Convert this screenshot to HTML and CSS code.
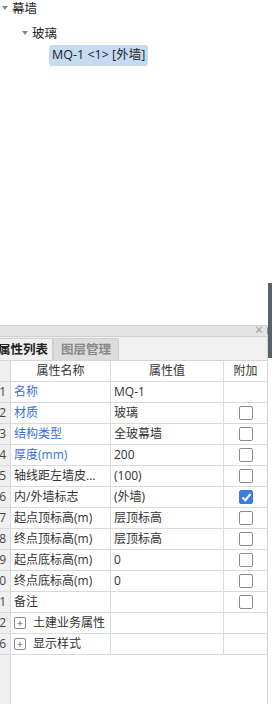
FILE: index.html
```html
<!DOCTYPE html>
<html lang="zh-CN">
<head>
  <meta charset="UTF-8" />
  <title>属性列表</title>
  <link rel="stylesheet" href="styles.css">
</head>
<body>

<!-- Top: component tree -->
<div class="tree">
  <div class="node lvl0"><span class="arrow"></span>幕墙</div>
  <div class="node lvl1"><span class="arrow"></span>玻璃</div>
  <div class="node lvl2"><span class="sel">MQ-1 &lt;1&gt; [外墙]</span></div>
</div>
<div class="splitter"><span class="notch"></span></div>

<!-- Bottom: property panel -->
<div class="panel">
  <div class="panel-head"><span class="close">×</span></div>
  <div class="tabs">
    <div class="tab active">属性列表</div>
    <div class="tab">图层管理</div>
  </div>

  <div class="grid">
    <div class="row head">
      <div class="num"></div>
      <div class="cell center">属性名称</div>
      <div class="cell center">属性值</div>
      <div class="cell center">附加</div>
    </div>
    <div class="row"><div class="num">1</div><div class="cell blue">名称</div><div class="cell">MQ-1</div><div class="cell"></div></div>
    <div class="row"><div class="num">2</div><div class="cell blue">材质</div><div class="cell">玻璃</div><div class="cell"><span class="box"></span></div></div>
    <div class="row"><div class="num">3</div><div class="cell blue">结构类型</div><div class="cell">全玻幕墙</div><div class="cell"><span class="box"></span></div></div>
    <div class="row"><div class="num">4</div><div class="cell blue">厚度(mm)</div><div class="cell">200</div><div class="cell"><span class="box"></span></div></div>
    <div class="row"><div class="num">5</div><div class="cell">轴线距左墙皮...</div><div class="cell">(100)</div><div class="cell"><span class="box"></span></div></div>
    <div class="row"><div class="num">6</div><div class="cell">内/外墙标志</div><div class="cell">(外墙)</div><div class="cell"><span class="box checked"></span></div></div>
    <div class="row"><div class="num">7</div><div class="cell">起点顶标高(m)</div><div class="cell">层顶标高</div><div class="cell"><span class="box"></span></div></div>
    <div class="row"><div class="num">8</div><div class="cell">终点顶标高(m)</div><div class="cell">层顶标高</div><div class="cell"><span class="box"></span></div></div>
    <div class="row"><div class="num">9</div><div class="cell">起点底标高(m)</div><div class="cell">0</div><div class="cell"><span class="box"></span></div></div>
    <div class="row"><div class="num">10</div><div class="cell">终点底标高(m)</div><div class="cell">0</div><div class="cell"><span class="box"></span></div></div>
    <div class="row"><div class="num">11</div><div class="cell">备注</div><div class="cell"></div><div class="cell"><span class="box"></span></div></div>
    <div class="row"><div class="num">12</div><div class="cell"><span class="plus">+</span>土建业务属性</div><div class="cell"></div><div class="cell"></div></div>
    <div class="row"><div class="num">16</div><div class="cell"><span class="plus">+</span>显示样式</div><div class="cell"></div><div class="cell"></div></div>
    <div class="filler"><div class="num"></div><div class="rest"></div></div>
  </div>
</div>

</body>
</html>
```

FILE: styles.css
```css
body {
  margin: 0;
  width: 275px;
  height: 704px;
  overflow: hidden;
  background: #fff;
  font-family: "Open Sans", "Noto Sans CJK SC", sans-serif;
  font-size: 12px;
  color: #333;
  position: relative;
}
.tree {
  width: 268px;
  height: 325px;
  background: #fff;
}
.node {
  display: flex;
  align-items: center;
  font-size: 12.5px;
  color: #222;
}
.lvl0 { padding-left: 2px; height: 15px; }
.lvl1 { padding-left: 22px; margin-top: 10px; height: 15px; }
.lvl2 { padding-left: 49px; margin-top: 5px; height: 21px; }
.arrow {
  width: 0;
  height: 0;
  border-left: 3px solid transparent;
  border-right: 3px solid transparent;
  border-top: 4px solid #888;
  margin-right: 4px;
}
.sel {
  background: #c6dbf2;
  border-radius: 3px;
  padding: 2px 3px 3px 3px;
  line-height: 16px;
}
.splitter {
  position: absolute;
  left: 268px;
  top: 283px;
  width: 4px;
  height: 75px;
  background: #59626c;
}
.notch {
  position: absolute;
  left: -3px;
  top: 44px;
  width: 0;
  height: 0;
  border-top: 4px solid transparent;
  border-bottom: 4px solid transparent;
  border-right: 3px solid #8a9299;
}
.panel {
  width: 268px;
  height: 379px;
  border-right: 1px solid #d6d6d6;
  box-sizing: border-box;
  display: flex;
  flex-direction: column;
}
.panel-head {
  height: 10px;
  background: #e3e3e3;
  border-top: 1px solid #d0d0d0;
  border-bottom: 1px solid #d0d0d0;
  position: relative;
}
.close {
  position: absolute;
  right: 4px;
  top: -5px;
  font-size: 14px;
  line-height: 18px;
  color: #9a9a9a;
}
.tabs {
  height: 23px;
  background: #f0f0f0;
  display: flex;
  align-items: flex-end;
  border-bottom: 1px solid #d6d6d6;
}
.tab {
  height: 22px;
  line-height: 21px;
  padding: 0 7px;
  font-size: 12.5px;
  color: #888;
  background: #dcdcdc;
  border: 1px solid #cfcfcf;
  border-bottom: none;
  box-sizing: border-box;
  font-weight: bold;
  white-space: nowrap;
}
.tab.active {
  background: #f0f0f0;
  color: #222;
  margin-left: -4px;
  padding: 0 0 0 1px;
  width: 57px;
}
.grid {
  flex: 1;
  display: flex;
  flex-direction: column;
}
.row {
  display: grid;
  grid-template-columns: 11px 100px 113px 43px;
  height: 21px;
  border-bottom: 1px solid #dadada;
  box-sizing: border-box;
}
.num {
  background: #efefef;
  border-right: 1px solid #dadada;
  overflow: hidden;
  white-space: nowrap;
  direction: rtl;
  text-align: left;
  padding-right: 4px;
  line-height: 20px;
  color: #444;
}
.cell {
  border-right: 1px solid #dadada;
  padding-left: 3px;
  line-height: 20px;
  white-space: nowrap;
  overflow: hidden;
  display: flex;
  align-items: center;
}
.cell:last-child {
  border-right: none;
  justify-content: center;
  padding-left: 0;
}
.center { justify-content: center; }
.head .cell { padding-left: 0; }
.blue { color: #3a6fd8; }
.box {
  width: 12px;
  height: 12px;
  border: 1px solid #8a8a8a;
  border-radius: 2px;
  background: #fff;
}
.box.checked {
  background: #3b7ddd;
  border-color: #3b7ddd;
  position: relative;
}
.box.checked::after {
  content: "";
  position: absolute;
  left: 4px;
  top: 1px;
  width: 3px;
  height: 7px;
  border-right: 2px solid #fff;
  border-bottom: 2px solid #fff;
  transform: rotate(40deg);
}
.plus {
  display: inline-block;
  width: 10px;
  height: 10px;
  border: 1px solid #888;
  border-radius: 2px;
  font-size: 11px;
  line-height: 9px;
  text-align: center;
  color: #555;
  margin-right: 7px;
}
.filler {
  flex: 1;
  display: grid;
  grid-template-columns: 11px 1fr;
}
.filler .num { padding: 0; }
```
